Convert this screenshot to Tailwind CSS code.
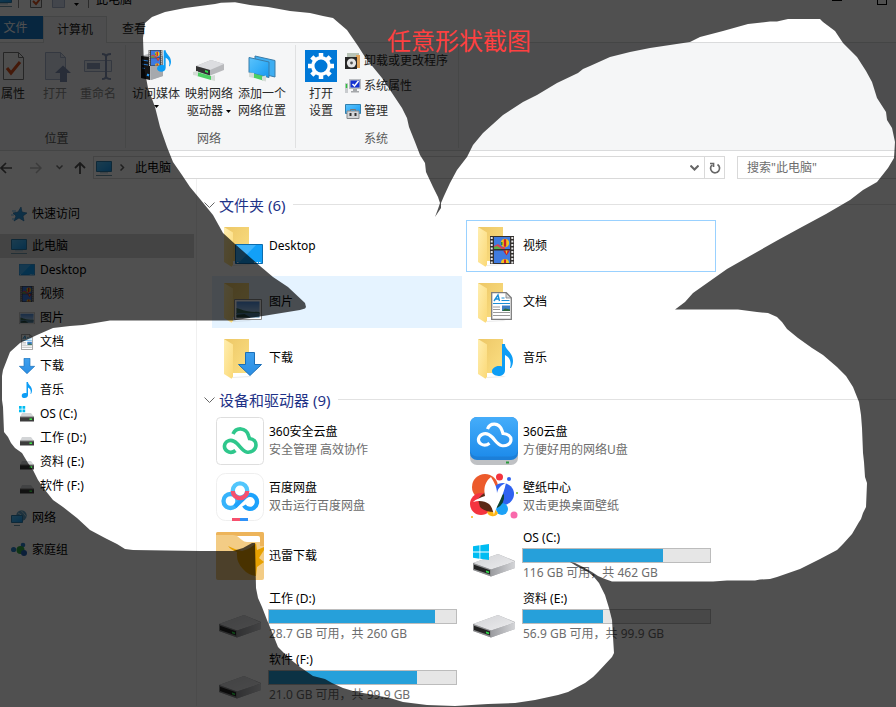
<!DOCTYPE html>
<html lang="zh-CN">
<head>
<meta charset="utf-8">
<meta name="viewport" content="width=device-width, initial-scale=1">
<title>此电脑</title>
<script src="https://cdn.jsdelivr.net/npm/@tailwindcss/browser@4"></script>
</head>
<body class="relative min-h-screen overflow-hidden bg-white font-['Noto_Sans','Noto_Sans_CJK_SC',sans-serif] text-xs leading-[18px] text-black">

<!-- Shared icons -->
<svg class="absolute h-0 w-0" aria-hidden="true">
  <defs>
    <linearGradient id="gFolder" x1="0" y1="0" x2="1" y2="1"><stop offset="0" stop-color="#edc766"/><stop offset="1" stop-color="#fbdf83"/></linearGradient>
    <linearGradient id="gFlap" x1="0" y1="0" x2="1" y2="1"><stop offset="0" stop-color="#ffeeb0"/><stop offset="1" stop-color="#fbd977"/></linearGradient>
    <linearGradient id="gScreen" x1="0" y1="0" x2="1" y2="1"><stop offset="0" stop-color="#5cc3fb"/><stop offset=".5" stop-color="#38b0f8"/><stop offset="1" stop-color="#1697ee"/></linearGradient>
    <linearGradient id="gDeck" x1="0" y1="0" x2="1" y2="1"><stop offset="0" stop-color="#d2d3d6"/><stop offset="1" stop-color="#ececee"/></linearGradient>
    <linearGradient id="gSide" x1="0" y1="0" x2="1" y2="0"><stop offset="0" stop-color="#9b9ca0"/><stop offset="1" stop-color="#d4d5d8"/></linearGradient>
    <linearGradient id="gCloud" x1="0" y1="0" x2="0" y2="1"><stop offset="0" stop-color="#45adfa"/><stop offset="1" stop-color="#1e8ceb"/></linearGradient>
    <linearGradient id="gArrow" x1="0" y1="0" x2="0" y2="1"><stop offset="0" stop-color="#3ea0ee"/><stop offset="1" stop-color="#2b8ee4"/></linearGradient>
    <linearGradient id="gSky" x1="0" y1="0" x2="0" y2="1"><stop offset="0" stop-color="#4f8fe0"/><stop offset="1" stop-color="#cfe6f8"/></linearGradient>
  </defs>
  <symbol id="folder" viewBox="0 0 48 48">
    <path d="M8 5h25v34H17L8 38z" fill="url(#gFolder)"/>
    <path d="M17 43l16-1 3 1-19 1z" fill="#00000014"/>
    <path d="M8 5l9 5.500V43l-1.500 1.700L8 40z" fill="url(#gFlap)"/>
  </symbol>
  <symbol id="film" viewBox="0 0 24 28">
    <path d="M0 0h24v28H0z" fill="#33302f"/>
    <path d="M1.700 1v27M22.300 1v27" stroke="#e8e8e8" stroke-width="2" stroke-dasharray="2 1.500"/>
    <path d="M4 1h16v12H4zM4 14.500h16V27H4z" fill="#3f7be0"/>
    <path d="M4 10l4-2 4 3 3-1v3H4z" fill="#d8405a"/>
    <path d="M4 11l3-1 5 3H4z" fill="#58b048"/>
    <circle cx="15" cy="7" r="4.200" fill="#f2c21c"/><path d="M13.800 3.200h2.400v7.500h-2.400z" fill="#c8202c"/><path d="M11 6h1.500v3H11z" fill="#2a8f3c"/>
    <path d="M13 14.500h7l-3.500 5z" fill="#c8202c"/><path d="M15.500 14.500h2l-1 4z" fill="#f2c21c"/>
    <path d="M11 27a4 4 0 0 1 8 0z" fill="#f2c21c"/><path d="M14 23.500h2V27h-2z" fill="#c8202c"/>
  </symbol>
  <symbol id="doc" viewBox="0 0 21 28">
    <path d="M.7.700h14.600l5 5v21.600H.7z" fill="#fff" stroke="#7d7d7d" stroke-width="1.300"/>
    <path d="M15 1v5h5z" fill="#d8dadc" stroke="#7d7d7d" stroke-width=".8"/>
    <path d="M3 9l4-6 1.500 6M4.500 7h3.500" fill="none" stroke="#1b8fd6" stroke-width="1.400"/>
    <path d="M10.500 6h3M10.500 8.500h8M2 11.500h17" stroke="#1b8fd6"/>
    <path d="M2 15h7M2 17.500h7M2 20.500h17M2 23.500h17" stroke="#9a9a9a"/>
    <path d="M11 13.500h8v5.500h-8z" fill="#3d7fc4"/><path d="M11 19l3-2.500 5 1V19z" fill="#2f6b3e"/>
  </symbol>
  <symbol id="note" viewBox="0 0 21 32">
    <path d="M10 0h3c0 6 8 8 8 17 0 3-1 5-2 7h-1c2-7-1-11-5-13v15c0 4-3 6-6.500 6S0 30 0 27.300 3 22 7 22c1 0 2 0 3 .5z" fill="#0d9df5"/>
  </symbol>
  <symbol id="desk" viewBox="0 0 28 20">
    <path d="M.5.500h27v19H.5z" fill="#12a0f8" stroke="#0c6cae"/><path d="M1 1h20L5 17.500H1z" fill="#40b4fb"/>
    <path d="M2 18.500h2M19 18.500h7" stroke="#fff" stroke-dasharray="1.500 1"/>
  </symbol>
  <symbol id="photo" viewBox="0 0 28 21">
    <path d="M.5.500h27v20H.5z" fill="#fff" stroke="#8c8c8c"/><path d="M2.500 2.500h23v16h-23z" fill="url(#gSky)"/>
    <path d="M2.500 9c5 1 7 4 23 4v2h-23z" fill="#3b6b5a"/><path d="M2.500 14h23v4.500h-23z" fill="#4d7fa0"/><path d="M2.500 16l8-1 6 3.500h-14z" fill="#26483e"/>
  </symbol>
  <symbol id="down" viewBox="0 0 24 24">
    <path d="M7.500.500h9v12h7L12 23.500.5 12.500h7z" fill="url(#gArrow)" stroke="#1b6fb8"/>
  </symbol>
  <symbol id="drive" viewBox="0 0 48 48">
    <path d="M3 31l25-9 17 7v7l-24 8.500L3 38z" fill="#a9aaad"/>
    <path d="M3 31l25-9 17 7.500-24 8z" fill="url(#gDeck)"/>
    <path d="M21 37.500l24-8V36l-24 8.500z" fill="url(#gSide)"/>
    <path d="M3 31l18 6.500v7L3 38z" fill="#8b8c8e"/><path d="M4 32.800l16 5.500v4.200L4 37z" fill="#232323"/>
    <path d="M16 38.500l3 1v1.700l-3-1z" fill="#2ee04a"/>
  </symbol>
  <symbol id="win" viewBox="0 0 16 16">
    <path d="M0 2.200L6.500 1.300v6.200H0zM7.300 1.200L16 0v7.500H7.300zM0 8.500h6.500v6.200L0 13.800zM7.300 8.500H16V16l-8.700-1.200z" fill="#00bcf2"/>
  </symbol>
  <symbol id="minidrive" viewBox="0 0 16 16">
    <path d="M3 5h9l3 4H1z" fill="#d3d5d7"/><path d="M1 9h14v4.500H1z" fill="#3c3c3c"/><path d="M1 9h14" stroke="#777"/><path d="M10.500 11.200h2.500" stroke="#3ff04a" stroke-width="1.500"/>
  </symbol>
  <symbol id="pc" viewBox="0 0 16 16">
    <path d="M.5 1.500h15v10H.5z" fill="url(#gScreen)" stroke="#2f7fae"/><path d="M4 12.800h8" stroke="#9ec3d8"/><path d="M0 15.500h16" stroke="#6f98ad"/>
  </symbol>
</svg>

<!-- Title bar -->
<header class="flex h-4 items-end overflow-hidden pb-2 pr-[9px]">
  <svg class="mb-px h-4 w-4 -ml-1 shrink-0" viewBox="0 0 16 16"><use href="#pc"/></svg>
  <span class="ml-[6px] h-3 w-px bg-[#888]"></span>
  <svg class="ml-[11px] h-4 w-3 shrink-0" viewBox="0 0 12 16"><path d="M.5.500h11v15H.5z" fill="#f5f5f5" stroke="#777"/><path d="M3 9l3 3 4-5" fill="none" stroke="#d8501e" stroke-width="2"/></svg>
  <svg class="ml-[10px] h-4 w-[13px] shrink-0" viewBox="0 0 13 16"><path d="M.5.500h12v15H.5z" fill="#d5dff2" stroke="#aab6cf"/></svg>
  <svg class="mb-[2px] ml-[9px] h-[3px] w-[5px]" viewBox="0 0 5 3"><path d="M0 0h5L2.500 3z"/></svg>
  <span class="ml-[9px] h-3 w-px bg-[#888]"></span>
  <h1 class="ml-[7px] leading-4">此电脑</h1>
  <div class="ml-auto flex items-end gap-[35px]">
    <button type="button" aria-label="最小化" class="mb-[7px] h-px w-[10px] bg-black"></button>
    <button type="button" aria-label="最大化" class="mb-[3px] h-[10px] w-[10px] border border-black"></button>
  </div>
</header>

<!-- Ribbon tabs -->
<nav class="flex h-[27px] border-b border-[#dadbdc]">
  <button type="button" class="h-[23px] w-[43px] bg-[#1979ca] pr-3 text-white">文件</button>
  <button type="button" class="h-[27px] w-16 border border-b-0 border-[#dadbdc] bg-[#f5f6f7] text-[#222]">计算机</button>
  <button type="button" class="h-[26px] w-[54px] text-[#222]">查看</button>
</nav>

<!-- Ribbon -->
<section class="flex h-[108px] border-b border-[#dadbdc] bg-[#f5f6f7] leading-[17px] text-[#2b2b2b]">
  <div class="flex w-[125px] flex-col justify-between pb-[3px] pt-[7px]">
    <div class="flex text-[#8a8a8a]">
      <button type="button" class="flex w-[26px] flex-col items-center gap-[3px] whitespace-nowrap text-[#2b2b2b]">
        <svg class="h-8 w-[26px]" viewBox="0 0 26 32"><path d="M3.500 2.500h15l5 5v22h-20z" fill="#f7f7f7" stroke="#777"/><path d="M18.500 2.500v5h5" fill="none" stroke="#777"/><path d="M7 18l4 5 9-11" fill="none" stroke="#d8501e" stroke-width="3"/></svg>
        属性
      </button>
      <button type="button" class="ml-1 flex w-[50px] flex-col items-center gap-[3px]">
        <svg class="h-8 w-8" viewBox="0 0 32 32"><path d="M6.500 2.500h15l5 5v22h-20z" fill="#dbe2ef" stroke="#a5b1cb"/><path d="M21.500 2.500v5h5" fill="none" stroke="#a5b1cb"/><path d="M24 15.500L32 23h-4v9h-7v-9h-5z" fill="#7f90b4"/></svg>
        打开
      </button>
      <button type="button" class="flex w-9 flex-col items-center gap-[3px]">
        <svg class="h-8 w-8" viewBox="0 0 32 32"><path d="M2.500 10.500h27v11h-27z" fill="#e6ebf4" stroke="#a5b1cb"/><path d="M5 13h13v6H5z" fill="#93a2c3"/><path d="M20 4q4 0 4 3v19q0 3-4 3M29 4q-5 0-5 3M29 29q-5 0-5-3" fill="none" stroke="#8796b8" stroke-width="2"/></svg>
        重命名
      </button>
    </div>
    <div class="pr-3 text-center text-[#5a5a5a]">位置</div>
  </div>
  <div class="my-[2px] w-px bg-[#e0e1e2]"></div>
  <div class="flex w-[169px] flex-col justify-between pb-[3px] pt-[7px]">
    <div class="flex items-start gap-[5px] pl-[6px]">
      <button type="button" class="flex w-12 flex-col items-center gap-[3px] whitespace-nowrap">
        <svg class="h-8 w-8" viewBox="0 0 32 32"><path d="M1 6l10-3 12 3v20l-12 4L1 28z" fill="#b8babd"/><path d="M1 6l9 1v23L1 28z" fill="#151515"/><path d="M10 7l13-1v20l-12 4z" fill="#a6a9ad"/><path d="M2 10l6 1M2 14l6 1M2 18l3 .5" stroke="#2674c8"/><path d="M7 24.500l2 1" stroke="#26a0ff" stroke-width="2"/><svg x="8" y="0" width="15" height="16"><use href="#film"/></svg><svg x="17" y="0" width="14" height="22"><use href="#note"/></svg></svg>
        <span>访问媒体</span>
        <svg class="h-[3px] w-[5px]" viewBox="0 0 5 3"><path d="M0 0h5L2.500 3z"/></svg>
      </button>
      <button type="button" class="flex w-12 flex-col items-center gap-[3px] whitespace-nowrap">
        <svg class="h-8 w-8" viewBox="0 0 32 32"><path d="M3 16l15-6 13 4v6L16 26 3 21z" fill="#b8b9bc"/><path d="M3 16l15-6 13 4-14 6z" fill="#dcdde0"/><path d="M3 16l14 4v5.500L3 21z" fill="#333"/><path d="M12 20l3 1v2l-3-1z" fill="#2ee04a"/><path d="M4 22l14 4v4L4 26z" fill="#4ccf63"/><path d="M0 22l5-1v5l-5-1zM18 26l4-1v6l-4-1z" fill="#d5dcd7"/></svg>
        <span>映射网络<br>驱动器 <svg class="inline h-[3px] w-[5px]" viewBox="0 0 5 3"><path d="M0 0h5L2.500 3z"/></svg></span>
      </button>
      <button type="button" class="flex w-12 flex-col items-center gap-[3px] whitespace-nowrap">
        <svg class="h-8 w-8" viewBox="0 0 32 32"><path d="M9 6l20 4.500V27L9 22z" fill="#3eaef2" stroke="#3a7ca8"/><path d="M3 7.500l20 4.500v15.500L3 22.500z" fill="url(#gScreen)" stroke="#3a7ca8"/><path d="M7 23.500l10 2.500v4.500L7 27.500z" fill="#4ccf63"/><path d="M3 22.500l5 .5v5l-5-1zM16 26.500l4-1v6l-4-1z" fill="#d5dcd7"/></svg>
        <span>添加一个<br>网络位置</span>
      </button>
    </div>
    <div class="pr-[3px] text-center text-[#5a5a5a]">网络</div>
  </div>
  <div class="my-[2px] w-px bg-[#e0e1e2]"></div>
  <div class="flex w-[162px] flex-col justify-between pb-[3px] pt-[7px]">
    <div class="flex items-start pl-[9px]">
      <button type="button" class="flex w-8 flex-col items-center gap-[3px]">
        <svg class="h-8 w-8" viewBox="0 0 32 32"><path d="M0 0h32v32H0z" fill="#0078d7"/><circle cx="16" cy="16" r="8.200" fill="none" stroke="#fff" stroke-width="3.400"/><g stroke="#fff" stroke-width="4.500"><path d="M16 3v4M16 25v4M3 16h4M25 16h4"/><path d="M6.800 6.800l2.900 2.900M22.300 22.300l2.900 2.900M6.800 25.200l2.900-2.900M22.300 9.700l2.900-2.900"/></g></svg>
        <span>打开<br>设置</span>
      </button>
      <div class="ml-2 flex flex-col gap-2 pt-[2px] whitespace-nowrap">
        <button type="button" class="flex items-center gap-[3px]">
          <svg class="h-4 w-4" viewBox="0 0 16 16"><path d="M2 0h12v14H2z" fill="#b8c3b6"/><path d="M11 2h4v13h-4z" fill="#e0a45c"/><path d="M0 4h12v12H0z" fill="#262626"/><circle cx="6.500" cy="10" r="4.600" fill="#e4e4e4"/><circle cx="6.500" cy="10" r="1.400" fill="#555"/></svg>
          卸载或更改程序
        </button>
        <button type="button" class="flex items-center gap-[3px]">
          <svg class="h-4 w-4" viewBox="0 0 16 16"><path d="M0 5h3v10H0z" fill="#c9cccf"/><path d="M1.500 6v4" stroke="#2ebf3d" stroke-width="1.500"/><path d="M4 1h12v10H4z" fill="#b9bcc0"/><path d="M5.500 2.500h9v7h-9z" fill="#1432d2"/><path d="M7.500 6l2 2 4-5" fill="none" stroke="#fff" stroke-width="1.500"/><path d="M8 11h4v2h2v1.500H6V13h2z" fill="#a5a8ab"/></svg>
          系统属性
        </button>
        <button type="button" class="flex items-center gap-[3px]">
          <svg class="h-4 w-4" viewBox="0 0 16 16"><path d="M.5 1.500h15v9H.5z" fill="url(#gScreen)" stroke="#2f7fae"/><path d="M5.500 6.500h5v2h-5z" fill="none" stroke="#777"/><path d="M2 8h12v7.500H2z" fill="#d4d6d8" stroke="#85888a"/><path d="M5.500 10v3M10.500 10v3" stroke="#333" stroke-width="2"/></svg>
          管理
        </button>
      </div>
    </div>
    <div class="pr-[2px] text-center text-[#5a5a5a]">系统</div>
  </div>
  <div class="my-[2px] w-px bg-[#e0e1e2]"></div>
</section>

<!-- Address bar -->
<div class="flex h-[28px] items-end">
  <div class="flex h-[23px] w-[93px] shrink-0 items-center">
    <button type="button" aria-label="后退" class="w-3"><svg class="h-3 w-3" viewBox="0 0 12 12" fill="none" stroke="#555" stroke-width="1.700"><path d="M12 6H1M6 1L1 6l5 5"/></svg></button>
    <button type="button" aria-label="前进" class="ml-[18px] w-3"><svg class="h-3 w-3" viewBox="0 0 12 12" fill="none" stroke="#bbb" stroke-width="1.500"><path d="M0 6h11M6 1l5 5-5 5"/></svg></button>
    <button type="button" aria-label="最近浏览的位置" class="ml-[14px] w-[7px]"><svg class="h-[5px] w-[7px]" viewBox="0 0 7 5" fill="none" stroke="#777" stroke-width="1.500"><path d="M.5.500l3 3 3-3"/></svg></button>
    <button type="button" aria-label="上移" class="ml-[11px] w-3"><svg class="h-3 w-3" viewBox="0 0 12 12" fill="none" stroke="#555" stroke-width="1.800"><path d="M6 12V1M1 6l5-5 5 5"/></svg></button>
  </div>
  <div class="flex h-[23px] flex-1 items-center border border-[#d9d9d9] pl-[2px]">
    <svg class="h-4 w-4" viewBox="0 0 16 16"><use href="#pc"/></svg>
    <svg class="ml-2 h-[7px] w-[5px]" viewBox="0 0 5 7" fill="none" stroke="#666" stroke-width="1.500"><path d="M.5.500l3 3-3 3"/></svg>
    <a href="#" class="ml-[10px]">此电脑</a>
    <button type="button" aria-label="以前的位置" class="ml-auto mr-[5px]"><svg class="h-[6px] w-[9px]" viewBox="0 0 9 6" fill="none" stroke="#666" stroke-width="2"><path d="M.5.500l4 4 4-4"/></svg></button>
    <button type="button" aria-label="刷新" class="flex h-full w-5 items-center justify-center border-l border-[#d9d9d9]"><svg class="h-3 w-3" viewBox="0 0 12 12" fill="none" stroke="#666" stroke-width="1.700"><path d="M8.500 2.500A4.500 4.500 0 1 1 3 3M1 1.500h3.500V5"/></svg></button>
  </div>
  <input type="search" aria-label="搜索此电脑" placeholder='搜索"此电脑"' class="ml-3 h-[23px] w-[159px] shrink-0 border border-r-0 border-[#d9d9d9] pl-[9px] outline-none placeholder:text-[#6d6d6d]">
</div>

<div class="flex">
  <!-- Navigation pane -->
  <aside class="flex min-h-[527px] w-[197px] shrink-0 flex-col gap-2 border-r border-[#f0f0f0] pr-[2px] pt-[23px]">
    <a href="#" class="flex h-6 items-center gap-[5px] pl-[11px]"><svg class="h-4 w-4" viewBox="0 0 16 16"><path d="M10 1l1 5 5 1-4 3 1 5-5-3-5 3 2-5-3-3 5-1z" fill="#2f9ae0" stroke="#1c71ad" stroke-width=".6"/><path d="M1 5h4M0 9h3M1 13h3" stroke="#6ab9ec"/></svg>快速访问</a>
    <div>
      <a href="#" class="flex h-6 items-center gap-[5px] bg-[#d9d9d9] pl-[11px]"><svg class="h-4 w-4" viewBox="0 0 16 16"><use href="#pc"/></svg>此电脑</a>
      <a href="#" class="flex h-6 items-center gap-[5px] pl-[19px]"><svg class="h-4 w-4" viewBox="0 0 28 28"><use href="#desk" y="3" width="28" height="21"/></svg>Desktop</a>
      <a href="#" class="flex h-6 items-center gap-[5px] pl-[19px]"><svg class="h-4 w-4" viewBox="0 0 28 28"><use href="#film" x="2" width="24" height="28"/></svg>视频</a>
      <a href="#" class="flex h-6 items-center gap-[5px] pl-[19px]"><svg class="h-4 w-4" viewBox="0 0 28 28"><use href="#photo" y="4" width="28" height="21"/></svg>图片</a>
      <a href="#" class="flex h-6 items-center gap-[5px] pl-[19px]"><svg class="h-4 w-4" viewBox="0 0 28 28"><use href="#doc" x="3" width="22" height="28"/></svg>文档</a>
      <a href="#" class="flex h-6 items-center gap-[5px] pl-[19px]"><svg class="h-4 w-4" viewBox="0 0 24 24"><use href="#down" width="24" height="24"/></svg>下载</a>
      <a href="#" class="flex h-6 items-center gap-[5px] pl-[19px]"><svg class="h-4 w-4" viewBox="0 0 32 32"><use href="#note" x="5" width="21" height="32"/></svg>音乐</a>
      <a href="#" class="flex h-6 items-center gap-[5px] pl-[19px]"><svg class="h-4 w-4" viewBox="0 0 16 16"><use href="#minidrive" y="2" width="16" height="16"/><path d="M0 0h2.700v2.700H0zM3.500 0h2.700v2.700H3.500zM0 3.500h2.700v2.700H0zM3.500 3.500h2.700v2.700H3.500z" fill="#00bcf2"/></svg>OS (C:)</a>
      <a href="#" class="flex h-6 items-center gap-[5px] pl-[19px]"><svg class="h-4 w-4" viewBox="0 0 16 16"><use href="#minidrive" y="2" width="16" height="16"/></svg>工作 (D:)</a>
      <a href="#" class="flex h-6 items-center gap-[5px] pl-[19px]"><svg class="h-4 w-4" viewBox="0 0 16 16"><use href="#minidrive" y="2" width="16" height="16"/></svg>资料 (E:)</a>
      <a href="#" class="flex h-6 items-center gap-[5px] pl-[19px]"><svg class="h-4 w-4" viewBox="0 0 16 16"><use href="#minidrive" y="2" width="16" height="16"/></svg>软件 (F:)</a>
    </div>
    <a href="#" class="flex h-6 items-center gap-[5px] pl-[11px]"><svg class="h-4 w-4" viewBox="0 0 16 16"><circle cx="10.500" cy="5.500" r="5.200" fill="#5f9fc4"/><path d="M7 3q4 1 4 5M10 .5q3 3 5 6" stroke="#b8dbe8" fill="none"/><path d="M.5 5.500h11v7H.5z" fill="url(#gScreen)" stroke="#2f7fae"/><path d="M3 15.500h6" stroke="#6f98ad"/></svg>网络</a>
    <a href="#" class="flex h-6 items-center gap-[5px] pl-[11px]"><svg class="h-4 w-4" viewBox="0 0 16 16"><circle cx="2.600" cy="7.500" r="2.600" fill="#2c80c8"/><circle cx="12" cy="3" r="2.300" fill="#2c80c8"/><circle cx="9.500" cy="8" r="4" fill="#35a844"/><circle cx="13" cy="11" r="3" fill="#2565b5"/></svg>家庭组</a>
  </aside>

  <!-- File list -->
  <main class="flex min-w-0 flex-1 flex-col gap-[5px] pl-[7px] pt-[15px]">
    <div class="flex h-[21px] items-center">
      <svg class="h-[6px] w-[11px]" viewBox="0 0 11 6" fill="none" stroke="#666"><path d="M.5.500l5 5 5-5"/></svg>
      <h2 class="ml-1 text-[15px] text-[#1e3287]">文件夹 (6)</h2>
      <span class="ml-2 h-px flex-1 bg-[#e2e2e2]"></span>
    </div>
    <div class="grid grid-cols-[250px_250px] gap-1 pl-2">
      <a href="#" class="flex h-[52px] items-center gap-[5px] pl-1"><svg class="h-12 w-12" viewBox="0 0 48 48"><use href="#folder"/><use href="#desk" x="19" y="22" width="28" height="20"/></svg>Desktop</a>
      <a href="#" class="flex h-[52px] items-center gap-[5px] pl-1 outline -outline-offset-1 outline-[#99d1ff]"><svg class="h-12 w-12" viewBox="0 0 48 48"><use href="#folder"/><use href="#film" x="20" y="14" width="24" height="28"/></svg>视频</a>
      <a href="#" class="flex h-[52px] items-center gap-[5px] bg-[#e5f3ff] pl-1"><svg class="h-12 w-12" viewBox="0 0 48 48"><use href="#folder"/><use href="#photo" x="18" y="21" width="28" height="21"/></svg>图片</a>
      <a href="#" class="flex h-[52px] items-center gap-[5px] pl-1"><svg class="h-12 w-12" viewBox="0 0 48 48"><use href="#folder"/><use href="#doc" x="21" y="14" width="21" height="28"/></svg>文档</a>
      <a href="#" class="flex h-[52px] items-center gap-[5px] pl-1"><svg class="h-12 w-12" viewBox="0 0 48 48"><use href="#folder"/><use href="#down" x="22" y="18" width="24" height="24"/></svg>下载</a>
      <a href="#" class="flex h-[52px] items-center gap-[5px] pl-1"><svg class="h-12 w-12" viewBox="0 0 48 48"><use href="#folder"/><use href="#note" x="22" y="10" width="21" height="32"/></svg>音乐</a>
    </div>

    <div class="flex h-[21px] items-center">
      <svg class="h-[6px] w-[11px]" viewBox="0 0 11 6" fill="none" stroke="#666"><path d="M.5.500l5 5 5-5"/></svg>
      <h2 class="ml-1 text-[15px] text-[#1e3287]">设备和驱动器 (9)</h2>
      <span class="ml-2 h-px flex-1 bg-[#e2e2e2]"></span>
    </div>
    <div class="grid grid-cols-[250px_250px] gap-1 pl-2">
      <a href="#" class="flex h-[52px] items-center gap-[5px] pl-1">
        <svg class="h-12 w-12" viewBox="0 0 48 48"><rect x=".5" y=".5" width="47" height="47" rx="4" fill="#fff" stroke="#dedede"/><path d="M17 17C20 10 30 10 32.500 18.500c.5 1.500 1 3 1 3C38 22 40 25 40 28c0 5-5 8-9.500 7-4-1-6-5-9.500-8.500-3-3-6-4-9-2.500-4 2-5 7-1 10 2.500 1.800 6 1.500 8.500-.5" fill="none" stroke="#2fc78c" stroke-width="3.600"/></svg>
        <span>360安全云盘<br><span class="text-[#6d6d6d]">安全管理 高效协作</span></span>
      </a>
      <a href="#" class="flex h-[52px] items-center gap-[5px] pl-1">
        <svg class="h-12 w-12" viewBox="0 0 48 48"><rect y="4" width="48" height="44" rx="7" fill="#bfc1c4"/><rect width="48" height="43" rx="7" fill="#1c7fd8"/><rect width="48" height="39.500" rx="7" fill="url(#gCloud)"/><path d="M36 45.500h3" stroke="#2b9a3c" stroke-width="2"/><path d="M17.500 12C20 5.500 29 5 32 13.500c.5 1.500 1 3 1 3C38 17 41 19.500 41 22.500c0 4.500-5 7-9.500 6-4-1-6-5-9.500-8.500-3-3-7-4-10-2.500-4 2-5 7-1 9.500 2.500 1.500 6 1.200 8.500-.8" fill="none" stroke="#fff" stroke-width="3.200"/></svg>
        <span>360云盘<br><span class="text-[#6d6d6d]">方便好用的网络U盘</span></span>
      </a>
      <a href="#" class="flex h-[52px] items-center gap-[5px] pl-1">
        <svg class="h-12 w-12" viewBox="0 0 48 48"><rect x=".5" y=".5" width="47" height="47" rx="9" fill="#fff" stroke="#efefef"/><g fill="none" stroke-width="4.300"><path d="M19.500 23L30 34a7.200 7.200 0 1 0 .5-11.500" stroke="#1d9ffc" stroke-opacity="0"/><circle cx="14.500" cy="28" r="7" stroke="#36b3fb"/><path d="M28 32.500a7 7 0 1 0 1.500-9L19 33.500" stroke="#1da2fc"/><circle cx="24" cy="17.500" r="7.200" stroke="#52c6fc"/><path d="M16.800 18a7.200 7.200 0 0 0 14.400 0" stroke="#f6506e"/></g><path d="M16 45h8v3h-8z" fill="#f6506e"/><path d="M24 45h8v3h-8z" fill="#2f92f8"/></svg>
        <span>百度网盘<br><span class="text-[#6d6d6d]">双击运行百度网盘</span></span>
      </a>
      <a href="#" class="flex h-[52px] items-center gap-[5px] pl-1">
        <svg class="h-12 w-12 overflow-visible" viewBox="0 0 48 48"><circle cx="15" cy="14" r="13" fill="#ec5a2b"/><circle cx="11" cy="31" r="11" fill="#f4343f"/><circle cx="33" cy="21" r="11" fill="#2f62f0"/><circle cx="32" cy="36" r="6" fill="#1ba1f6"/><path d="M17 39a6 6 0 0 0 11 1l-4-5z" fill="#fdb515"/><path d="M8 26q7-9 16-9l6 10-6 12q-9 0-14-5z" fill="#5b2a16"/><path d="M25 26l9-5q1 10-7 14z" fill="#0e4230"/><path d="M21 4C16 8 13 14 15 23 10 25 6 26 3 29c6-2 12-1 16 2 3 3 4 7 5 11 1-7 8-14 12-32-5 2-8 5-9 10 0-6-3-11-6-16z" fill="#fff"/><circle cx="29.500" cy="4" r="3.500" fill="#f4343f"/><circle cx="39" cy="6" r="2" fill="#2f62f0"/><circle cx="47" cy="20" r="1" fill="#6cb52d"/><circle cx="44" cy="42" r="3.500" fill="#f969ab"/><circle cx="2" cy="44" r="1" fill="#fdb515"/></svg>
        <span>壁纸中心<br><span class="text-[#6d6d6d]">双击更换桌面壁纸</span></span>
      </a>
      <a href="#" class="flex h-[57px] items-center gap-[5px] pl-1">
        <svg class="h-12 w-12" viewBox="0 0 48 48"><rect width="48" height="48" rx="2" fill="#f3cc85"/><path d="M2 0h44q2 0 2 2v12h-4V6q0-2-2-2H22l-5-1H0V2q0-2 2-2z" fill="#edb45a"/><path d="M21 4h21q2 0 2 2v4H31q-3 0-5-2z" fill="#fff"/><path d="M12 14q8 4 14 5 10-3 14-8l1 7 7-3v3l-5 8 5 4-7 5-1 9q-8-1-13-7-7-7-6-17-6-2-9-6z" fill="#e7a100"/></svg>
        <span>迅雷下载</span>
      </a>
      <a href="#" class="flex h-[57px] items-center gap-1 pl-1">
        <svg class="h-12 w-12" viewBox="0 0 48 48"><use href="#drive"/><use href="#win" x="3" y="12" width="16" height="16"/></svg>
        <span class="w-[189px]"><span class="block pl-px">OS (C:)</span><span role="meter" aria-label="OS (C:)" aria-valuenow="75" class="my-px block h-[15px] border border-[#bcbcbc] bg-[#e6e6e6]"><span class="block h-full bg-[#26a0da]" style="width:75%"></span></span><span class="block pl-px text-[#6d6d6d]">116 GB 可用，共 462 GB</span></span>
      </a>
      <a href="#" class="flex h-[57px] items-center gap-1 pl-1">
        <svg class="h-12 w-12" viewBox="0 0 48 48"><use href="#drive"/></svg>
        <span class="w-[189px]"><span class="block pl-px">工作 (D:)</span><span role="meter" aria-label="工作 (D:)" aria-valuenow="89" class="my-px block h-[15px] border border-[#bcbcbc] bg-[#e6e6e6]"><span class="block h-full bg-[#26a0da]" style="width:89%"></span></span><span class="block pl-px text-[#6d6d6d]">28.7 GB 可用，共 260 GB</span></span>
      </a>
      <a href="#" class="flex h-[57px] items-center gap-1 pl-1">
        <svg class="h-12 w-12" viewBox="0 0 48 48"><use href="#drive"/></svg>
        <span class="w-[189px]"><span class="block pl-px">资料 (E:)</span><span role="meter" aria-label="资料 (E:)" aria-valuenow="43" class="my-px block h-[15px] border border-[#bcbcbc] bg-[#e6e6e6]"><span class="block h-full bg-[#26a0da]" style="width:43%"></span></span><span class="block pl-px text-[#6d6d6d]">56.9 GB 可用，共 99.9 GB</span></span>
      </a>
      <a href="#" class="flex h-[57px] items-center gap-1 pl-1">
        <svg class="h-12 w-12" viewBox="0 0 48 48"><use href="#drive"/></svg>
        <span class="w-[189px]"><span class="block pl-px">软件 (F:)</span><span role="meter" aria-label="软件 (F:)" aria-valuenow="79" class="my-px block h-[15px] border border-[#bcbcbc] bg-[#e6e6e6]"><span class="block h-full bg-[#26a0da]" style="width:79%"></span></span><span class="block pl-px text-[#6d6d6d]">21.0 GB 可用，共 99.9 GB</span></span>
      </a>
    </div>
  </main>
</div>

<!-- Freeform capture mask -->
<svg class="pointer-events-none absolute inset-0 h-full w-full" viewBox="0 0 896 707" preserveAspectRatio="none" aria-hidden="true">
  <path fill="#000" fill-opacity=".686" fill-rule="evenodd" d="M0 0H896V707H0Z
  M143 38L145 23L152 17L165 12L185 8L200 6L215 4L221 2.700L235 2.300L250 5L268 7L290 11L310 13L323 16L333 18L340 24L347 30L358 46L365 57L373 67L382 78L392 93L402 108L407 118L409 127L415 142L420 155L425 163L426 172L433 187L438 197L440 203L438 209L435 217L441 208L441 203L444 196L450 183L457 170L467 157L473 145L483 133L503 115L523 102L537 95L557 83L578 73L583 69L590 66L610 57L630 52L650 48L690 42L700 37L723 31L748 24L770 21.500L777 21.500L788 19H820L823 22L835 31L843 43L857 57L866 71L872 82L877 98L886 112L887 120L892 128L895 142L894 158L888 168L877 182L863 190L850 200L826 214L800 228L778 240L727 269L693 293L685 302L675 309.500H738L757 312L768 313L777 317L782 322L787 329L798 338L812 348L823 355L837 367L846 376L853 387L859 402L861 415L862 428L863 453L864 462L865 477L867 483L866 507L863 513L861 519L859 522L852 534L843 544L837 550L820 559L800 569L777 577L770 579L760 579.500L755 580.500H727L713 581.500H612L605 579L598 576L592 572L583 567L575 563L570 562L578 567L588 572L594 577L599 583L605 595L609 608L612 620L613 637L614 653L612 657L598 672L593 677L585 683L568 692L558 695L535 700L515 703L488 704L455 706L427 705L403 702L390 698L363 693L353 691L343 688L332 683L325 679L313 676L300 667L290 659L278 647L272 632L267 620L262 607L258 598L256 588L255 543H252L243 548L233 551H200L133 550L125 549L117 544L105 538L90 530L77 518L63 507L53 500L45 490L38 480L33 470L28 463L22 453L15 448L11 443L8 437L4 432L3 407L2 400L2 376L3 370L10 352L20 343L37 335L53 328L70 326L83 325L110 320.500H233L263 316L300 310L305 308.500L306 307L305 303L288 287L273 277L260 266L235 244L223 233L213 215L200 199L190 187L182 175L173 162L167 147L160 127L155 107L148 88L144 67Z"/>
</svg>
<p class="absolute left-[387px] top-[23px] text-2xl leading-9 text-[#ff4040]">任意形状截图</p>
</body>
</html>
